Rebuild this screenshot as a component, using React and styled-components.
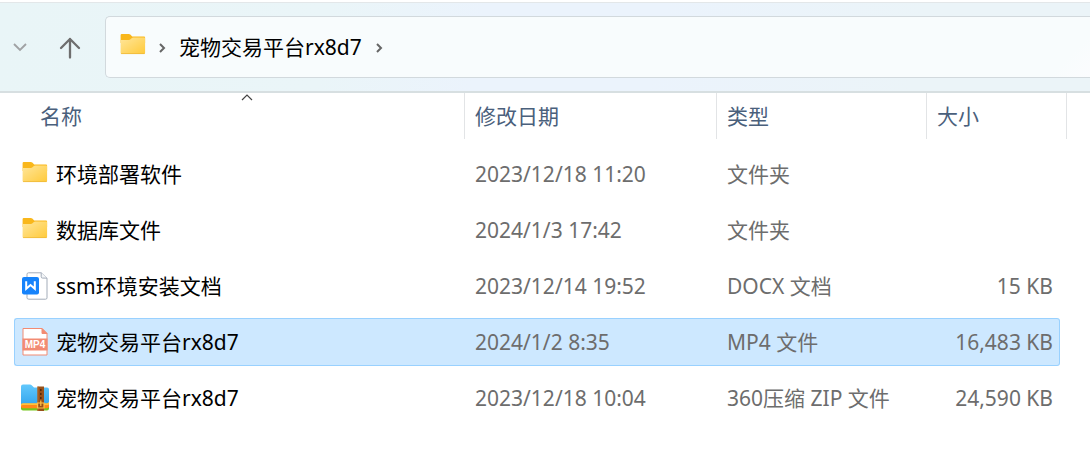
import React from "react";
import styled, { createGlobalStyle, css } from "styled-components";

const GlobalStyle = createGlobalStyle`
  * { box-sizing: border-box; }
  body {
    margin: 0;
    background: #fff;
    font-family: "Noto Sans", "Noto Sans CJK SC", sans-serif;
    font-size: 21px;
    line-height: 28px;
    color: #000;
  }
`;

const Window = styled.div`
  padding-top: 2px;
  overflow: hidden;
`;

const Toolbar = styled.header`
  display: flex;
  align-items: center;
  height: 91px;
  border-top: 1px solid #e3e7e9;
  border-bottom: 2px solid #d7dfe1;
  background: linear-gradient(100deg, #e9f5f7 0%, #eaf5f8 30%, #ebf3fc 44%, #ebf3fc 60%, #ebf4f8 84%, #ebf4f8 100%);
`;

const ToolButton = styled.button`
  display: flex;
  align-items: center;
  justify-content: center;
  flex: none;
  width: ${(p) => p.$width}px;
  height: 48px;
  padding: 0;
  border: 0;
  background: none;
`;

const AddressBar = styled.nav`
  display: flex;
  align-items: center;
  flex: 1;
  height: 62px;
  margin-left: 5px;
  padding-left: 13px;
  border: 1px solid #d2d9dd;
  border-right: 0;
  border-radius: 5px 0 0 5px;
  background: linear-gradient(135deg, #f8fcfd 96%, #fbfcfe 100%);
`;

const Crumb = styled.a`
  color: #000;
  text-decoration: none;
  white-space: nowrap;
`;

const CrumbButton = styled(ToolButton)`
  height: 36px;
`;

const FileTable = styled.table`
  width: calc(100% - 37px);
  margin-left: 14px;
  table-layout: fixed;
  border-collapse: collapse;
`;

const Column = styled.col`
  width: ${(p) => (p.$width ? `${p.$width}px` : "auto")};
`;

const HeaderCell = styled.th`
  padding: 0 0 7px;
  font-weight: 400;
  text-align: left;
`;

const HeaderLabel = styled.div`
  position: relative;
  display: flex;
  align-items: center;
  height: 46px;
  padding-left: ${(p) => (p.$first ? 26 : 10)}px;
  border-right: 1px solid #e2e4e6;
  color: #4a607c;
`;

const SortMark = styled.svg`
  position: absolute;
  top: 0;
  left: calc(50% + 1px);
`;

const Cell = styled.td`
  padding: 4px 0;
`;

const CellBody = styled.div`
  display: flex;
  align-items: center;
  justify-content: ${(p) => (p.$last ? "flex-end" : "flex-start")};
  height: 48px;
  padding: 0 ${(p) => (p.$last ? 6 : 0)}px 0 ${(p) => (p.$first ? 6 : 10)}px;
  border: 1px solid transparent;
  border-width: 1px ${(p) => (p.$last ? 1 : 0)}px 1px ${(p) => (p.$first ? 1 : 0)}px;
  border-radius: ${(p) => (p.$first ? "3px 0 0 3px" : p.$last ? "0 3px 3px 0" : "0")};
  color: ${(p) => (p.$first ? "#000" : "#6d6d6d")};
  white-space: nowrap;
  ${(p) =>
    p.$selected &&
    css`
      background: #cde8ff;
      border-color: #99d1ff;
    `}
`;

const FileIcon = styled.svg`
  flex: none;
  width: 28px;
  height: 28px;
  margin-right: 7px;
`;

function FolderShape() {
  return (
    <>
      <defs>
        <linearGradient id="folder" x1="0" y1="0" x2="1" y2="1">
          <stop offset="0" stopColor="#ffe69b" />
          <stop offset="1" stopColor="#ffca3a" />
        </linearGradient>
      </defs>
      <g transform="translate(.6 -1)">
        <path d="M1 4.200Q1 3 2.200 3h7q.9 0 1.500.6L12.600 5.500H24.500q1 0 1 1V12H1z" fill="#f9b71b" />
        <path d="M1 9h8.200q1 0 1.700-.7l1.400-1.300q.6-.5 1.400-.5H24.500q1 0 1 1v14.300q0 1.200-1.200 1.200H2.200Q1 23 1 21.800z" fill="url(#folder)" />
        <path d="M1.500 22.600h23.500" stroke="#eeb739" strokeWidth=".8" />
      </g>
    </>
  );
}

function DocShape() {
  return (
    <>
      <path d="M7.500.8h12.700l5.800 5.300v19.700q0 1.400-1.400 1.400H7.900q-1.900 0-1.900-1.400V2.300Q6 .8 7.500.8z" fill="#fff" stroke="#a3acb9" />
      <path d="M20.200.8v3.900q0 1.400 1.400 1.400h4.400" fill="#f4f6f8" stroke="#a3acb9" />
      <rect x="1" y="5" width="17" height="17.500" rx="2" fill="#1683fb" />
      <path d="M5.200 9.300v7.500l4.300-3.800 4.300 3.800v-7.500" fill="none" stroke="#fff" strokeWidth="2" />
    </>
  );
}

function Mp4Shape() {
  return (
    <>
      <path d="M2 .5h19l5 5v21.500H2z" fill="#fff" stroke="#f28b73" />
      <path d="M21 .5v5h5z" fill="#f28b73" stroke="#f28b73" />
      <path d="M1.500 10.500h25V22.500h-25z" fill="#f28b73" />
      <text x="14" y="20.200" textAnchor="middle" fontFamily="Liberation Sans, sans-serif" fontSize="10" fontWeight="700" fill="#fff">MP4</text>
    </>
  );
}

function ZipShape() {
  return (
    <>
      <defs>
        <linearGradient id="zip" x1="0" y1="0" x2="0" y2="1">
          <stop offset="0" stopColor="#62c8fc" />
          <stop offset="1" stopColor="#34a6ee" />
        </linearGradient>
      </defs>
      <path d="M0 20h28v4.500q0 2-2 2H2q-2 0-2-2z" fill="#76c51d" />
      <path d="M0 19h28v3.300q0 2-2 2H2q-2 0-2-2z" fill="#ff8a18" />
      <path d="M0 2.500Q0 .5 2 .5h7q1 0 1.700.8L13 3.500h13q2 0 2 2v12.300q0 2-2 2H2q-2 0-2 1z" fill="url(#zip)" />
      <path d="M0 20.500q.3-1.200 2-1.200h24q1.600 0 2-1.200v1.800q0 1.200-2 1.200H2q-1.500 0-2 1z" fill="#ffc33b" />
      <path d="M16.500 2.500h6.500v24.500h-6.500z" fill="#985019" />
      <path d="M16.500 2.500h1v24.500h-1z" fill="#bb6a27" />
      <path d="M19.800 5v10" stroke="#512708" strokeWidth="1.500" strokeDasharray="2 2" />
      <path d="M16.500 19h6.500v5h-6.500zM19.800 16.500v5.500" fill="none" stroke="#ffc34a" strokeWidth="1.200" />
    </>
  );
}

const shapes = { folder: FolderShape, doc: DocShape, mp4: Mp4Shape, zip: ZipShape };

function Icon({ kind }) {
  const Shape = shapes[kind];
  return (
    <FileIcon viewBox="0 0 28 28" aria-hidden="true">
      <Shape />
    </FileIcon>
  );
}

function CrumbArrow({ label }) {
  return (
    <CrumbButton $width={20} aria-label={label}>
      <svg width="8" height="12" viewBox="0 0 8 12">
        <path d="M2 3l4 4-4 4" fill="none" stroke="#666" strokeWidth="2" />
      </svg>
    </CrumbButton>
  );
}

const AddressIcon = styled.span`
  display: flex;
  margin-top: -2px;
`;

const Path = styled.div`
  display: flex;
  align-items: center;
  gap: 7px;
  margin-left: -2px;
`;

const files = [
  { icon: "folder", name: "环境部署软件", date: "2023/12/18 11:20", type: "文件夹", size: "" },
  { icon: "folder", name: "数据库文件", date: "2024/1/3 17:42", type: "文件夹", size: "" },
  { icon: "doc", name: "ssm环境安装文档", date: "2023/12/14 19:52", type: "DOCX 文档", size: "15 KB" },
  { icon: "mp4", name: "宠物交易平台rx8d7", date: "2024/1/2 8:35", type: "MP4 文件", size: "16,483 KB", selected: true },
  { icon: "zip", name: "宠物交易平台rx8d7", date: "2023/12/18 10:04", type: "360压缩 ZIP 文件", size: "24,590 KB" },
];

export default function App() {
  return (
    <Window>
      <GlobalStyle />
      <Toolbar>
        <ToolButton $width={40} aria-label="最近浏览的位置">
          <svg width="14" height="10" viewBox="0 0 14 10">
            <path d="M1 2l6 6 6-6" fill="none" stroke="#a0a2a4" strokeWidth="1.900" />
          </svg>
        </ToolButton>
        <ToolButton $width={60} aria-label="上移">
          <svg width="22" height="24" viewBox="0 0 22 24">
            <path d="M11 22.500V4M2 13l9-9 9 9" fill="none" stroke="#6e6e6e" strokeWidth="2.300" strokeLinecap="round" strokeLinejoin="round" />
          </svg>
        </ToolButton>
        <AddressBar aria-label="地址">
          <AddressIcon>
            <Icon kind="folder" />
          </AddressIcon>
          <Path>
            <CrumbArrow label="此位置" />
            <Crumb href="#">宠物交易平台rx8d7</Crumb>
            <CrumbArrow label="子文件夹" />
          </Path>
        </AddressBar>
      </Toolbar>
      <FileTable>
        <colgroup>
          <Column />
          <Column $width={252} />
          <Column $width={210} />
          <Column $width={133} />
          <Column $width={7} />
        </colgroup>
        <thead>
          <tr>
            <HeaderCell aria-sort="ascending">
              <HeaderLabel $first>
                名称
                <SortMark width="14" height="8" viewBox="0 0 14 8" aria-hidden="true">
                  <path d="M2 7l5-5 5 5" fill="none" stroke="#444" strokeWidth="1.200" />
                </SortMark>
              </HeaderLabel>
            </HeaderCell>
            <HeaderCell><HeaderLabel>修改日期</HeaderLabel></HeaderCell>
            <HeaderCell><HeaderLabel>类型</HeaderLabel></HeaderCell>
            <HeaderCell colSpan={2}><HeaderLabel>大小</HeaderLabel></HeaderCell>
          </tr>
        </thead>
        <tbody>
          {files.map((file) => (
            <tr key={file.icon + file.name} aria-selected={!!file.selected}>
              <Cell>
                <CellBody $first $selected={file.selected}>
                  <Icon kind={file.icon} />
                  {file.name}
                </CellBody>
              </Cell>
              <Cell><CellBody $selected={file.selected}>{file.date}</CellBody></Cell>
              <Cell><CellBody $selected={file.selected}>{file.type}</CellBody></Cell>
              <Cell><CellBody $last $selected={file.selected}>{file.size}</CellBody></Cell>
            </tr>
          ))}
        </tbody>
      </FileTable>
    </Window>
  );
}
